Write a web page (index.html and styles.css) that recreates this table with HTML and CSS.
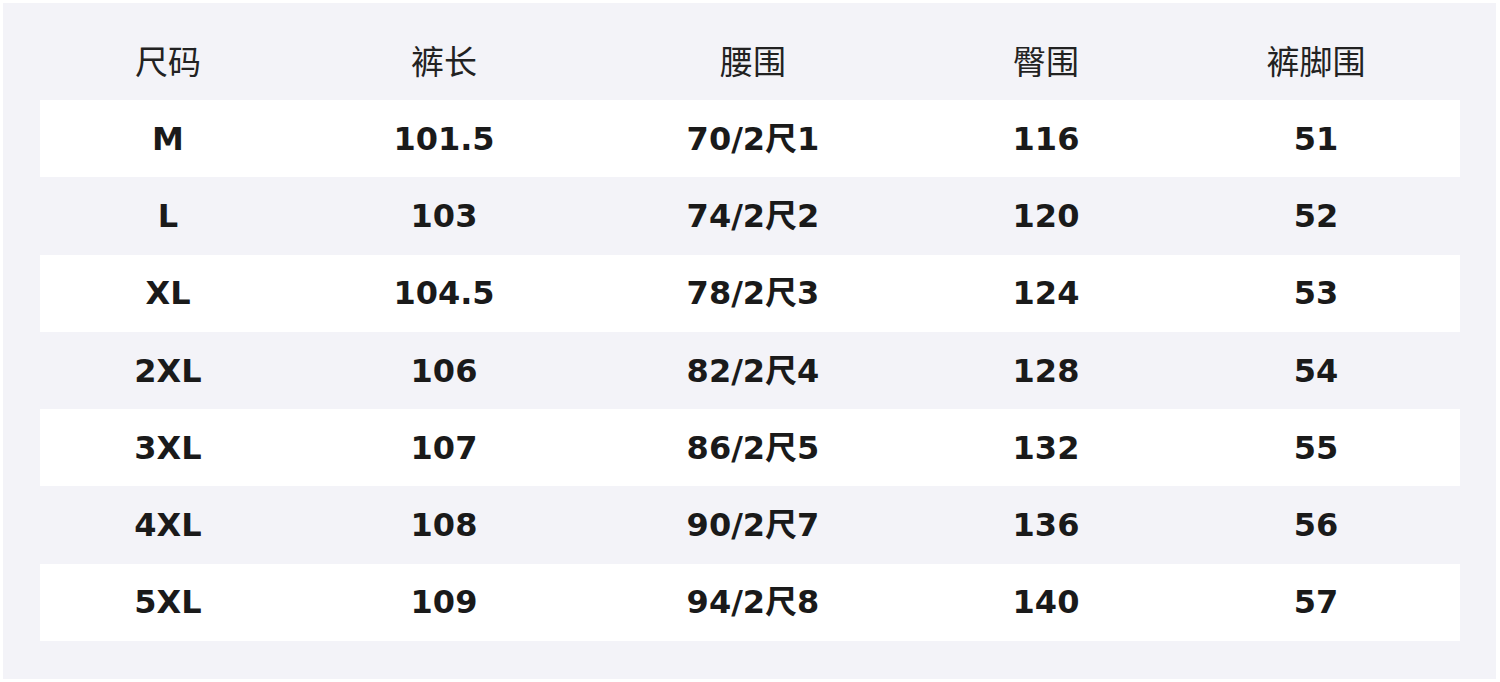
FILE: index.html
```html
<!DOCTYPE html>
<html lang="zh-CN">
<head>
<meta charset="utf-8">
<title>尺码表</title>
<link rel="stylesheet" href="styles.css">
</head>
<body>
<div class="panel">
  <div class="table">
    <div class="row head">
      <div class="cell">尺码</div><div class="cell">裤长</div><div class="cell">腰围</div><div class="cell">臀围</div><div class="cell">裤脚围</div>
    </div>
    <div class="row odd">
      <div class="cell">M</div><div class="cell">101.5</div><div class="cell">70/2尺1</div><div class="cell">116</div><div class="cell">51</div>
    </div>
    <div class="row">
      <div class="cell">L</div><div class="cell">103</div><div class="cell">74/2尺2</div><div class="cell">120</div><div class="cell">52</div>
    </div>
    <div class="row odd">
      <div class="cell">XL</div><div class="cell">104.5</div><div class="cell">78/2尺3</div><div class="cell">124</div><div class="cell">53</div>
    </div>
    <div class="row">
      <div class="cell">2XL</div><div class="cell">106</div><div class="cell">82/2尺4</div><div class="cell">128</div><div class="cell">54</div>
    </div>
    <div class="row odd">
      <div class="cell">3XL</div><div class="cell">107</div><div class="cell">86/2尺5</div><div class="cell">132</div><div class="cell">55</div>
    </div>
    <div class="row">
      <div class="cell">4XL</div><div class="cell">108</div><div class="cell">90/2尺7</div><div class="cell">136</div><div class="cell">56</div>
    </div>
    <div class="row odd">
      <div class="cell">5XL</div><div class="cell">109</div><div class="cell">94/2尺8</div><div class="cell">140</div><div class="cell">57</div>
    </div>
  </div>
</div>
</body>
</html>
```

FILE: styles.css
```css
html, body {
  margin: 0;
  padding: 0;
  background: #ffffff;
}
body {
  width: 1500px;
  height: 682px;
  padding: 3px 4px 3px 3px;
  box-sizing: border-box;
}
.panel {
  height: 676px;
  background: #f3f3f8;
  padding: 21px 36px 0 37px;
  box-sizing: border-box;
}
.table {
  display: flex;
  flex-direction: column;
}
.row {
  display: grid;
  grid-template-columns: 256px 296px 322px 264px 282px;
  height: 77.3px;
  align-items: center;
  font-family: "DejaVu Sans", "Noto Sans CJK SC", sans-serif;
  font-weight: bold;
  font-size: 32px;
  color: #1a1a1a;
}
.row.head {
  height: 76px;
  padding-bottom: 4px;
  box-sizing: border-box;
  font-family: "Noto Sans CJK SC", sans-serif;
  font-weight: normal;
  font-size: 33px;
  color: #222222;
}
.row.odd {
  background: #ffffff;
}
.cell {
  text-align: center;
  line-height: 1;
}
.cell:last-child {
  padding-right: 6px;
}
```
